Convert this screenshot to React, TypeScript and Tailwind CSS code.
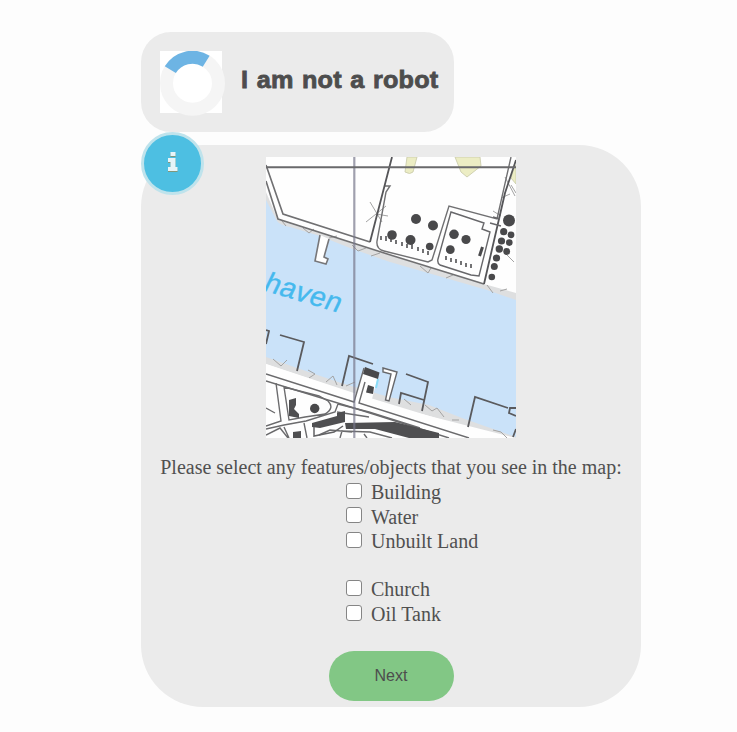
import React from "react";

const serif = "font-['Liberation_Serif',serif]";

function Spinner() {
  return (
    <svg className="block h-[66px] w-[66px] shrink-0" viewBox="160 51 66 66">
      <rect x="160" y="51" width="62" height="62" fill="#fff" />
      <circle cx="192.5" cy="83.3" r="26" fill="none" stroke="#f5f5f5" strokeWidth="13" />
      <path d="M170.3 69.7 A26 26 0 0 1 206.2 61.2" fill="none" stroke="#6db4e4" strokeWidth="13" />
    </svg>
  );
}

function Tank({ x, y, r }: { x: number; y: number; r: number }) {
  return <circle cx={x} cy={y} r={r} fill="#49494b" />;
}

const tanks = [
  [392, 235, 4.8], [410.5, 240, 5], [416, 219, 5], [433, 225.5, 5], [429.7, 246.5, 3.8],
  [454, 234.3, 4.8], [466, 239.5, 4.6], [450.3, 249.7, 4.4], [509, 220.5, 6],
  [503.7, 231.7, 3.6], [511, 234.8, 3.4], [501.5, 241, 3.6], [509.3, 242.6, 3.3],
  [499.3, 249, 3.7], [506.7, 251.5, 3.4], [496.5, 258, 3.6], [494.3, 266.5, 3.5], [491.8, 277, 3.3],
];

function MapImage() {
  return (
    <svg className="block h-[281px] w-[250px]" viewBox="266 157 250 281">
      <rect x="266" y="157" width="250" height="281" fill="#fefefe" />
      <path d="M407 157H417L413 172Q410 175 405 172ZM455 157H480L481 166L467 177L461 172ZM513 171L516 165V184L511 178Z" fill="#ecedc4" stroke="#cccdae" strokeWidth=".9" />
      <path d="M266 192L278 220L392 256L484 284L516 293V438L390 406L266 364Z" fill="#dedfe0" />
      <path d="M266 200L277 221Q280 225 290 227L320 236L350 248L390 262L487 290L516 300V437L462 418L429 405L389 397L341 383L300 369L266 357Z" fill="#cae2f9" />
      <g fill="none" stroke="#a3a3a3" strokeWidth="1">
        <path d="M282 221L286 226M303 228L309 233L314 229M329 238L337 236M352 245L358 251L366 248M371 256L380 253M420 266L428 273L431 268M446 278L453 275M487 285L493 293M500 291L507 289M273 359L281 366L287 360M308 370L315 374L309 378M326 382L333 376L337 385M346 386L355 382M404 399L411 405M425 405L432 411L437 408L444 417M452 420L459 420M493 430L501 432L507 438" />
        <path d="M366 222L386 206M370 202L382 222M376 214L388 216M505 177L515 196M501 198L510 194M493 211L501 216M511 185L516 193M506 254L514 262" />
      </g>
      <path d="M266 165L283 214L370 242M266 181L278 219L392 255.5L484 284" fill="none" stroke="#707072" strokeWidth="1.6" />
      <path d="M511 157L497 219L449 206L432 260L428 262L384 251Q376 249 377 241L386 192L390 186L384 186" fill="none" stroke="#707072" strokeWidth="1.4" />
      <path d="M370 242L392 157M484 284L505 193L516 160" fill="none" stroke="#555558" strokeWidth="1.8" />
      <path d="M451 212L484 223L482 229L490 232L479 276L471 275L440 265Q437 263 438 259ZM490 223L501 226M500 219L493 217" fill="none" stroke="#67676a" strokeWidth="1.4" />
      <path d="M320 235L315 261L326 264L328 259L324 257L329 239" fill="#fff" stroke="#77777a" strokeWidth="1.6" />
      <path d="M479.5 256L482.5 247" stroke="#49494b" strokeWidth="3" />
      <g stroke="#505053" strokeWidth="1.6">
        <path d="M381 240v-4M386 241v-5M391 242v-4M396 244v-4M402 246v-4M407 248v-4M412 249v-5M418 251v-4M423 253v-4M428 255v-4M446 260v-4M451 262v-4M456 263v-4M461 265v-4M466 267v-4M471 268v-4" />
      </g>
      {tanks.map(([x, y, r]) => <Tank key={`${x}-${y}`} x={x} y={y} r={r} />)}
      <text x="0" y="0" transform="translate(262 290) rotate(16.5) skewX(-9)" fill="#45b9ee" stroke="#45b9ee" strokeWidth=".4" className="font-['Liberation_Sans',sans-serif] text-[28px] tracking-[0.6px]">haven</text>
      <path d="M266 364L354 393L462 426L498 438H266Z" fill="#fefefe" />
      <path d="M354 402L364 368L379 373L372 399Z" fill="#fefefe" />
      <g fill="none" stroke="#6b6b6d" strokeWidth="1.4">
        <path d="M266 374L354 402L364 368M266 381L354 408M365 382L359 403L469 438M354 408L449 438" />
        <path d="M276 383L281 421L266 426M284 387L289 420L305 417L325 414Q335 408 328 401L319 396ZM266 408L275 413M338 404L335 412L306 421L284 425L266 429M338 404L369 412L420 428M337 412L369 417M266 435L280 428L288 438M284 427L289 438M304 423L307 438M340 438L342 431L370 432L392 438M319 435L330 430L352 432M364 434L367 438" />
      </g>
      <path d="M289 400L296 398L296 405L294 409L299 414V418L289 416ZM312 423L337 416V413L345 411V422L320 428L312 427ZM345 423L395 422L439 433V438H409L375 429L346 429ZM293 432L301 431V438H293Z" fill="#4f4f51" />
      <path d="M314 427V436L334 432L343 426" fill="none" stroke="#626264" strokeWidth="1.5" />
      <circle cx="314.7" cy="408.5" r="4.7" fill="#49494b" />
      <g fill="none" stroke="#5a5a5d" strokeWidth="1.8">
        <path d="M280 335L304 342L297 371M266 330L269 331L266 344M342 386L349 356L373 364M406 374L428 382L422 411M399 404L401 393L424 400M468 427L475 397L508 408M516 408L510 408L509 413L516 416M516 429L513 437" />
      </g>
      <path d="M378 379L376 388" stroke="#8bdcf7" strokeWidth="2" />
      <path d="M365 367L379.5 372.5L378 379L363 374ZM368 385L374 387L373 394L366 392.5Z" fill="#49494b" />
      <path d="M383 368L397 372L389 401L385.5 400L391 374L383 372Z" fill="#fff" stroke="#67676a" strokeWidth="1.4" />
      <path d="M354.3 157V438" stroke="#77778b" strokeOpacity=".7" strokeWidth="2.2" />
      <path d="M266 167.3H516" stroke="#69696b" strokeWidth="1.9" />
    </svg>
  );
}

function Choice({ label, height = "h-6", boxOffset = "mt-[3px]" }: { label: string; height?: string; boxOffset?: string }) {
  return (
    <label className={`flex items-start ${height}`}>
      <input type="checkbox" className={`h-4 w-4 shrink-0 appearance-none rounded-[3px] border border-[#858585] bg-white ${boxOffset}`} />
      <span className="ml-[9px] whitespace-nowrap leading-[25px]">{label}</span>
    </label>
  );
}

export default function App() {
  return (
    <main className="h-[732px] w-[737px] overflow-hidden bg-[#fdfdfd] pl-[141px] pt-8 text-[#505050]">
      <header className="flex h-[100px] w-[313px] items-start rounded-[30px] bg-[#ebebeb] pl-[19px] pt-[19px]">
        <Spinner />
        <h1 className="ml-[15px] mt-[11px] origin-left scale-x-[1.05] whitespace-nowrap font-['Liberation_Sans',sans-serif] text-2xl font-bold leading-9 tracking-[0.2px] text-[#4d4d4d] [-webkit-text-stroke:0.8px_#4d4d4d] [word-spacing:1.2px]">I am not a robot</h1>
      </header>
      <section className="relative mt-[13px] flex h-[562px] w-[500px] flex-col items-center rounded-[62px] bg-[#ebebeb] pt-3">
        <button aria-label="Information" className="absolute -top-[13px] left-0 flex h-[63px] w-[63px] items-center justify-center rounded-full border-[3px] border-[#bfe3ec] bg-[#4dbfe2]">
          <svg className="mb-[3px] h-5 w-[10px]" viewBox="0 0 10 20">
            <path d="M2.5 1h5v4h-5zM0 7h7.5v9h2v4H0v-4h2.5v-5H0z" fill="#80977b" />
            <path d="M2.5 0h5v4h-5zM0 6h7.5v9h2v4H0v-4h2.5v-5H0z" fill="#e7f4f8" />
          </svg>
        </button>
        <MapImage />
        <p className={`mt-[17px] whitespace-nowrap text-[20px] leading-[25px] ${serif}`}>Please select any features/objects that you see in the map:</p>
        <div className={`w-[90px] text-[20px] ${serif}`}>
          <Choice label="Building" height="h-[25px]" />
          <Choice label="Water" boxOffset="mt-[2px]" />
          <Choice label="Unbuilt Land" />
          <div className="h-6" />
          <Choice label="Church" height="h-[25px]" />
          <Choice label="Oil Tank" />
        </div>
        <button className="mt-[25px] h-[50px] w-[125px] rounded-full bg-[#82c785] font-['Liberation_Sans',sans-serif] text-base text-[#4d4d4d]">Next</button>
      </section>
    </main>
  );
}
